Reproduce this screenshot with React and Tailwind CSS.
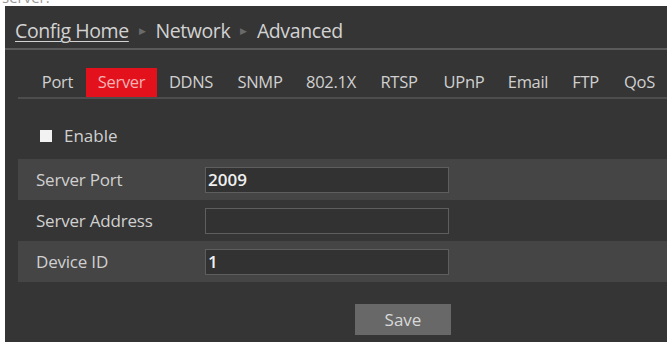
import React, { useState } from 'react';

const tabs = [
  { name: 'Port', w: 57 },
  { name: 'Server', w: 71 },
  { name: 'DDNS', w: 68 },
  { name: 'SNMP', w: 70 },
  { name: '802.1X', w: 72 },
  { name: 'RTSP', w: 64 },
  { name: 'UPnP', w: 66 },
  { name: 'Email', w: 62 },
  { name: 'FTP', w: 53 },
  { name: 'QoS', w: 55 },
];

const fields = [
  { label: 'Server Port', value: '2009', shaded: true },
  { label: 'Server Address', value: '', shaded: false },
  { label: 'Device ID', value: '1', shaded: true },
];

export default function App() {
  const [enabled, setEnabled] = useState(false);

  return (
    <div className="w-[671px] h-[345px] bg-white overflow-hidden" style={{ fontFamily: '"Open Sans", "Noto Sans", sans-serif' }}>
      {/* clipped text left over from the page above */}
      <div className="h-[6px] overflow-hidden pl-[2px]">
        <div className="-mt-[11px] text-[15px] leading-[16px] text-[#9a9a9a]">server.</div>
      </div>

      <div className="ml-[5px] mr-[4px] h-[336px] bg-[#353535] flex flex-col">
        {/* breadcrumb */}
        <div className="h-[42px] flex items-center pt-[8px] pl-[10px] text-[19.5px] tracking-[-0.4px] font-medium text-[#d2d2d2]">
          <span className="underline underline-offset-[3px] decoration-1">Config Home</span>
          <span className="mx-[10px] text-[9px] text-[#6a6a6a]">▶</span>
          <span>Network</span>
          <span className="mx-[10px] text-[9px] text-[#6a6a6a]">▶</span>
          <span>Advanced</span>
        </div>
        <div className="h-[2px] bg-[#5a5a5a]" />

        {/* tabs */}
        <div className="ml-[13px] pt-[18px] border-b-2 border-[#4d4d4d]">
          <div className="flex pl-[11px]">
            {tabs.map((t) => (
              <div
                key={t.name}
                style={{ width: t.w }}
                className={
                  'h-[29px] flex items-center justify-center text-[16.5px] tracking-[-0.3px] ' +
                  (t.name === 'Server' ? 'bg-[#e3111b] text-[#f3b3b3]' : 'text-[#d0d0d0]')
                }
              >
                {t.name}
              </div>
            ))}
          </div>
        </div>

        {/* enable */}
        <label className="mt-[30px] ml-[35px] h-[14px] flex items-center gap-[12px] text-[17px] text-[#d0d0d0]">
          <span
            onClick={() => setEnabled(!enabled)}
            className="w-[12px] h-[12px] bg-[#f2f2f2] flex items-center justify-center text-[10px] text-[#333]"
          >
            {enabled ? '✓' : ''}
          </span>
          <span>Enable</span>
        </label>

        {/* fields */}
        <div className="mt-[16px] ml-[13px]">
          {fields.map((f) => (
            <div key={f.label} className={'h-[41px] flex items-center ' + (f.shaded ? 'bg-[#454545]' : '')}>
              <div className="w-[187px] pl-[18px] text-[17px] tracking-[-0.2px] text-[#d0d0d0]">{f.label}</div>
              <div className="w-[244px] h-[26px] bg-[#323232] border border-[#5e5e5e] flex items-center pl-[2px] text-[17px] font-semibold text-[#f0f0f0]">
                {f.value}
              </div>
            </div>
          ))}
        </div>

        {/* save */}
        <div className="mt-[22px] ml-[350px]">
          <button className="w-[96px] h-[31px] bg-[#686868] text-[17px] font-medium text-[#d8d8d8]">Save</button>
        </div>
      </div>
    </div>
  );
}
